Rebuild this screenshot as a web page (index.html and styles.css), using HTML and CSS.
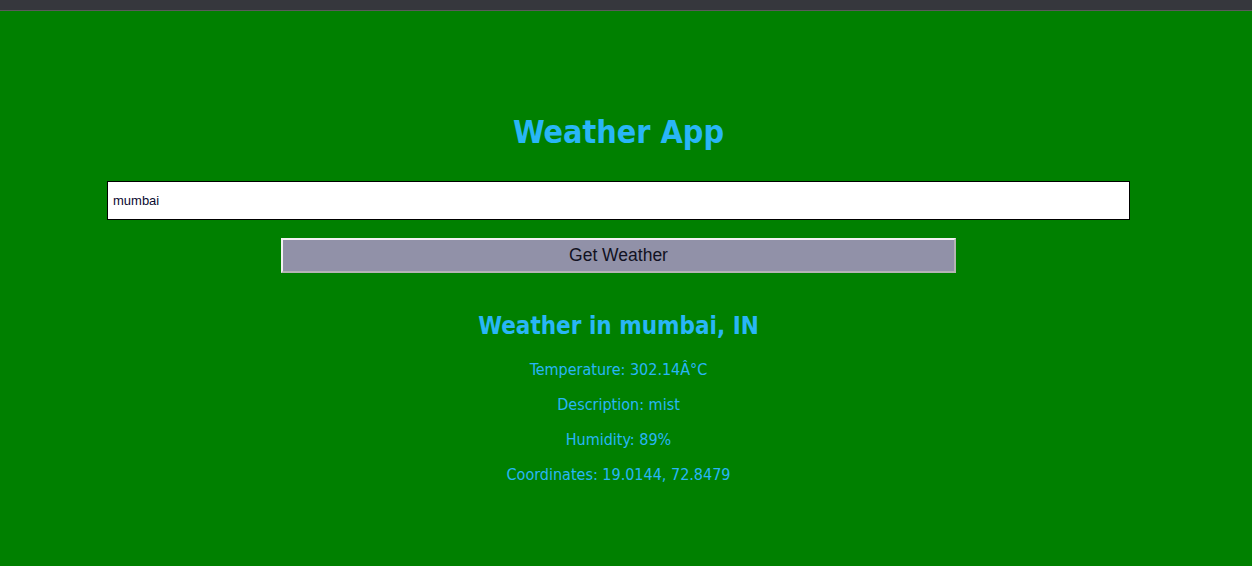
FILE: index.html
```html
<!DOCTYPE html>
<html lang="en">
<head>
<meta charset="utf-8">
<title>Weather App</title>
<link rel="stylesheet" href="styles.css">
</head>
<body>
<div class="topbar"></div>
<main class="app">
  <h1 class="title">Weather App</h1>
  <input class="city" type="text" value="mumbai">
  <button class="get-btn" type="button">Get Weather</button>
  <section class="result">
    <h2 class="result-title">Weather in mumbai, IN</h2>
    <p class="line">Temperature: 302.14Â°C</p>
    <p class="line">Description: mist</p>
    <p class="line">Humidity: 89%</p>
    <p class="line">Coordinates: 19.0144, 72.8479</p>
  </section>
</main>
</body>
</html>
```

FILE: styles.css
```css
html, body {
  margin: 0;
  padding: 0;
  background: #008000;
  height: 100%;
}
body {
  font-family: "DejaVu Sans Condensed", "DejaVu Sans", sans-serif;
  color: #29b6f6;
  overflow: hidden;
}
.topbar {
  height: 10px;
  background: #36373d;
  border-bottom: 1px solid #5a5a5a;
}
.app {
  width: 1237px;
  display: flex;
  flex-direction: column;
  align-items: center;
  padding-top: 101px;
}
.title {
  margin: 0;
  font-size: 32px;
  line-height: 40px;
  font-weight: bold;
}
.city {
  box-sizing: border-box;
  margin-top: 29px;
  width: 1023px;
  height: 39px;
  border: 1px solid #000;
  padding: 0 5px;
  background: #fff;
  font-family: "Liberation Sans", Arial, sans-serif;
  font-size: 13px;
  color: #0a0a30;
  outline: none;
}
.get-btn {
  box-sizing: border-box;
  margin-top: 18px;
  width: 675px;
  height: 35px;
  background: #9191a8;
  border: 2px solid;
  border-color: #f2f2f2 #b4b4b4 #b4b4b4 #f2f2f2;
  font-family: "Liberation Sans", Arial, sans-serif;
  font-size: 17.5px;
  color: #111122;
  padding: 0;
}
.result {
  margin-top: 38px;
  display: flex;
  flex-direction: column;
  align-items: center;
}
.result-title {
  margin: 0;
  font-size: 24px;
  line-height: 30px;
  font-weight: bold;
}
.line {
  margin: 19px 0 0;
  font-size: 16px;
  line-height: 19px;
}
.line + .line {
  margin-top: 16px;
}
```
